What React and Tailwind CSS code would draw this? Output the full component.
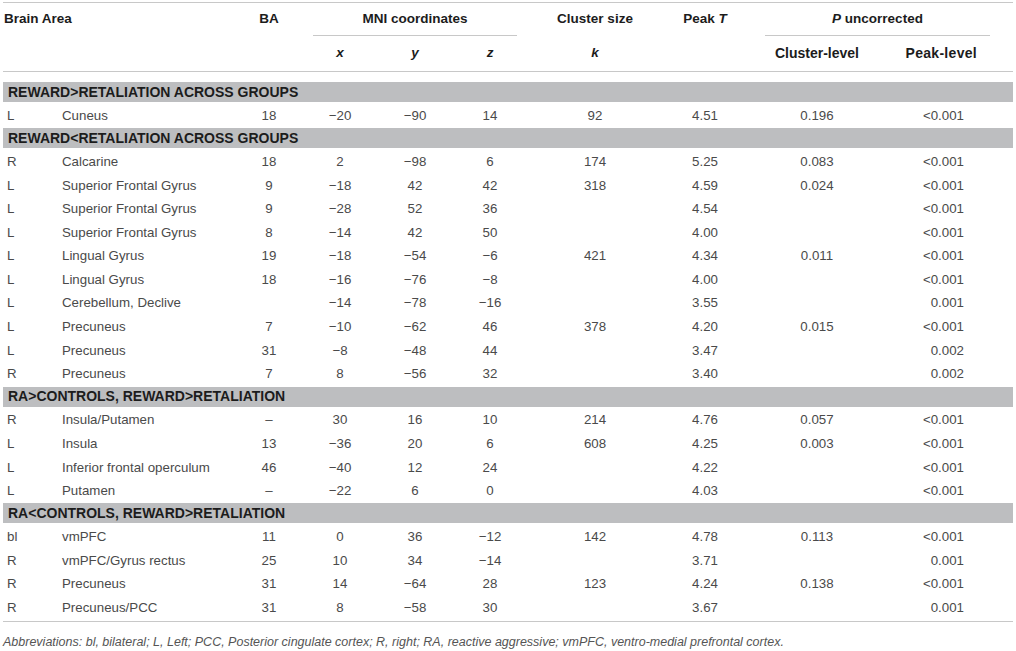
import React from "react";

const groups = [
  {
    title: "REWARD>RETALIATION ACROSS GROUPS",
    rows: [["L", "Cuneus", "18", "−20", "−90", "14", "92", "4.51", "0.196", "<0.001"]],
  },
  {
    title: "REWARD<RETALIATION ACROSS GROUPS",
    rows: [
      ["R", "Calcarine", "18", "2", "−98", "6", "174", "5.25", "0.083", "<0.001"],
      ["L", "Superior Frontal Gyrus", "9", "−18", "42", "42", "318", "4.59", "0.024", "<0.001"],
      ["L", "Superior Frontal Gyrus", "9", "−28", "52", "36", "", "4.54", "", "<0.001"],
      ["L", "Superior Frontal Gyrus", "8", "−14", "42", "50", "", "4.00", "", "<0.001"],
      ["L", "Lingual Gyrus", "19", "−18", "−54", "−6", "421", "4.34", "0.011", "<0.001"],
      ["L", "Lingual Gyrus", "18", "−16", "−76", "−8", "", "4.00", "", "<0.001"],
      ["L", "Cerebellum, Declive", "", "−14", "−78", "−16", "", "3.55", "", "0.001"],
      ["L", "Precuneus", "7", "−10", "−62", "46", "378", "4.20", "0.015", "<0.001"],
      ["L", "Precuneus", "31", "−8", "−48", "44", "", "3.47", "", "0.002"],
      ["R", "Precuneus", "7", "8", "−56", "32", "", "3.40", "", "0.002"],
    ],
  },
  {
    title: "RA>CONTROLS, REWARD>RETALIATION",
    rows: [
      ["R", "Insula/Putamen", "–", "30", "16", "10", "214", "4.76", "0.057", "<0.001"],
      ["L", "Insula", "13", "−36", "20", "6", "608", "4.25", "0.003", "<0.001"],
      ["L", "Inferior frontal operculum", "46", "−40", "12", "24", "", "4.22", "", "<0.001"],
      ["L", "Putamen", "–", "−22", "6", "0", "", "4.03", "", "<0.001"],
    ],
  },
  {
    title: "RA<CONTROLS, REWARD>RETALIATION",
    rows: [
      ["bl", "vmPFC", "11", "0", "36", "−12", "142", "4.78", "0.113", "<0.001"],
      ["R", "vmPFC/Gyrus rectus", "25", "10", "34", "−14", "", "3.71", "", "0.001"],
      ["R", "Precuneus", "31", "14", "−64", "28", "123", "4.24", "0.138", "<0.001"],
      ["R", "Precuneus/PCC", "31", "8", "−58", "30", "", "3.67", "", "0.001"],
    ],
  },
];

const cols =
  "grid grid-cols-[55px_174px_74px_68px_82px_68px_142px_78px_146px_123px]";

function DataRow({ row }) {
  return (
    <div className={`${cols} h-[23.6px] items-center text-[13.3px] text-[#4a4a4a]`}>
      <div className="pl-[4px]">{row[0]}</div>
      <div className="pl-[4px]">{row[1]}</div>
      {row.slice(2, 9).map((v, i) => (
        <div key={i} className="text-center">
          {v}
        </div>
      ))}
      <div className="text-right pr-[49px]">{row[9]}</div>
    </div>
  );
}

export default function App() {
  return (
    <div
      className="w-[1016px] h-[651px] bg-white pt-[2px] px-[3px]"
      style={{ fontFamily: '"Liberation Sans", Arial, sans-serif' }}
    >
      <div className="w-[1010px] border-t border-[#c8c8c8]">
        {/* header */}
        <div className="text-[13.5px] font-bold text-[#1c1c1c]">
          <div className={`${cols} h-[33px]`}>
            <div className="col-span-2 pl-[1px] flex items-center">Brain Area</div>
            <div className="flex items-center justify-center">BA</div>
            <div className="col-span-3 mx-[7px] border-b border-[#c8c8c8] flex items-center justify-center">
              MNI coordinates
            </div>
            <div className="flex items-center justify-center">Cluster size</div>
            <div className="flex items-center justify-center">
              Peak&nbsp;<i>T</i>
            </div>
            <div className="col-span-2 ml-[21px] mr-[23px] border-b border-[#c8c8c8] flex items-center justify-center">
              <i>P</i>&nbsp;uncorrected
            </div>
          </div>
          <div className={`${cols} h-[36px] items-center border-b border-[#c8c8c8]`}>
            <div />
            <div />
            <div />
            <div className="text-center italic">x</div>
            <div className="text-center italic">y</div>
            <div className="text-center italic">z</div>
            <div className="text-center italic">k</div>
            <div />
            <div className="text-center text-[14px]">Cluster-level</div>
            <div className="text-right pr-[36px] text-[14px] tracking-[0.3px]">Peak-level</div>
          </div>
        </div>

        {/* body */}
        <div className="pt-[10px] border-b border-[#c8c8c8] pb-[1px]">
          {groups.map((g) => (
            <div key={g.title}>
              <div className="h-[20px] bg-[#bdbec0] flex items-center pl-[5px] text-[14px] font-bold text-[#1c1c1c]">
                {g.title}
              </div>
              <div className="pt-[2px] pb-[0.5px]">
                {g.rows.map((r, i) => (
                  <DataRow key={i} row={r} />
                ))}
              </div>
            </div>
          ))}
        </div>

        <p className="mt-[11px] text-[12.5px] italic text-[#555]">
          Abbreviations: bl, bilateral; L, Left; PCC, Posterior cingulate cortex; R, right; RA,
          reactive aggressive; vmPFC, ventro-medial prefrontal cortex.
        </p>
      </div>
    </div>
  );
}
